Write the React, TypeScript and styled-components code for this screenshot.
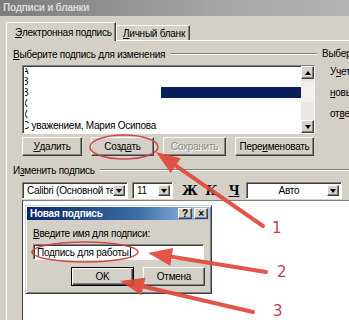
import * as React from 'react';
import styled, { createGlobalStyle, css } from 'styled-components';

const GlobalStyle = createGlobalStyle`
    html, body {
        margin: 0;
        padding: 0;
        background: #ffffff;
    }
    * {
        box-sizing: border-box;
    }
`;

const raised = css`
    border: 1px solid;
    border-color: #ffffff #404040 #404040 #ffffff;
    box-shadow: inset -1px -1px #808080;
    background: #d4d0c8;
`;

const sunken = css`
    border: 1px solid;
    border-color: #808080 #ffffff #ffffff #808080;
    box-shadow: inset 1px 1px #404040;
    background: #ffffff;
`;

type Pt = [number, number];

// arrow from tail to tip, with a triangular head at the tip
const Arrow: React.FC<{ tail: Pt; tip: Pt }> = ({ tail, tip }) => {
    const dx = tail[0] - tip[0];
    const dy = tail[1] - tip[1];
    const len = Math.hypot(dx, dy);
    const ux = dx / len;
    const uy = dy / len;
    const L = 24;
    const W = 9;
    const bx = tip[0] + ux * L;
    const by = tip[1] + uy * L;
    const head = [
        `${tip[0]},${tip[1]}`,
        `${bx - uy * W},${by + ux * W}`,
        `${bx + uy * W},${by - ux * W}`,
    ].join(' ');
    return (
        <g>
            <line x1={tail[0]} y1={tail[1]} x2={bx} y2={by} stroke="#e2483c" strokeWidth={4} strokeLinecap="round" />
            <polygon points={head} fill="#e2483c" />
        </g>
    );
};

const listItems = ['А', 'В', 'В', 'К', 'К', 'С уважением, Мария Осипова'];

const App: React.FC = () => {
    return (
        <StyledWindow>
            <GlobalStyle />
            <StyledTitleBar>Подписи и бланки</StyledTitleBar>
            <StyledBody>
                <StyledTabStrip>
                    <StyledTab active>
                        <u>Э</u>лектронная подпись
                    </StyledTab>
                    <StyledTab>
                        <u>Л</u>ичный бланк
                    </StyledTab>
                </StyledTabStrip>
                <StyledPanel>
                    <StyledUpper>
                        <StyledLeftColumn>
                            <StyledGroupHeader>
                                <span>
                                    <u>В</u>ыберите подпись для изменения
                                </span>
                            </StyledGroupHeader>
                            <StyledList>
                                <StyledListRows>
                                    {listItems.map((item, i) => (
                                        <StyledListRow key={i}>
                                            {item}
                                            {i === 2 && <StyledSelection />}
                                        </StyledListRow>
                                    ))}
                                </StyledListRows>
                                <StyledScrollBar>
                                    <StyledScrollButton>
                                        <StyledTriangle up />
                                    </StyledScrollButton>
                                    <StyledScrollTrack>
                                        <StyledScrollThumb />
                                    </StyledScrollTrack>
                                    <StyledScrollButton>
                                        <StyledTriangle />
                                    </StyledScrollButton>
                                </StyledScrollBar>
                            </StyledList>
                            <StyledButtonRow>
                                <StyledButton $width={60}>
                                    <u>У</u>далить
                                </StyledButton>
                                <StyledButton $width={63}>
                                    Созд<u>а</u>ть
                                </StyledButton>
                                <StyledButton $width={63} $disabled>
                                    Сохранить
                                </StyledButton>
                                <StyledButton $width={79}>
                                    Пере<u>и</u>меновать
                                </StyledButton>
                            </StyledButtonRow>
                        </StyledLeftColumn>
                        <StyledRightColumn>
                            <StyledRightLabel>Выберите подпись по умолчанию</StyledRightLabel>
                            <StyledRightItem>
                                У<u>ч</u>етная запись
                            </StyledRightItem>
                            <StyledRightItem>
                                <u>н</u>овые сообщения
                            </StyledRightItem>
                            <StyledRightItem>
                                от<u>в</u>еты
                            </StyledRightItem>
                        </StyledRightColumn>
                    </StyledUpper>

                    <StyledGroupHeader $wide>
                        <span>
                            И<u>з</u>менить подпись
                        </span>
                    </StyledGroupHeader>

                    <StyledToolbar>
                        <StyledCombo>
                            <StyledComboText>Calibri (Основной текст)</StyledComboText>
                            <StyledComboButton>
                                <StyledTriangle />
                            </StyledComboButton>
                        </StyledCombo>
                        <StyledCombo>
                            <StyledComboText>11</StyledComboText>
                            <StyledComboButton>
                                <StyledTriangle />
                            </StyledComboButton>
                        </StyledCombo>
                        <StyledFormatGroup>
                            <StyledFormatGlyph>Ж</StyledFormatGlyph>
                            <StyledFormatGlyph $italic>К</StyledFormatGlyph>
                            <StyledFormatGlyph $underline>Ч</StyledFormatGlyph>
                        </StyledFormatGroup>
                        <StyledCombo>
                            <StyledComboText $center>Авто</StyledComboText>
                            <StyledComboButton>
                                <StyledTriangle />
                            </StyledComboButton>
                        </StyledCombo>
                    </StyledToolbar>

                    <StyledEditor>
                        <StyledDialog>
                            <StyledDialogTitle>
                                <span>Новая подпись</span>
                                <StyledTitleButtons>
                                    <StyledTitleButton>?</StyledTitleButton>
                                    <StyledTitleButton>×</StyledTitleButton>
                                </StyledTitleButtons>
                            </StyledDialogTitle>
                            <StyledDialogBody>
                                <StyledDialogLabel>
                                    <u>В</u>ведите имя для подписи:
                                </StyledDialogLabel>
                                <StyledInput>
                                    Подпись для работы<StyledCaret />
                                </StyledInput>
                                <StyledDialogButtons>
                                    <StyledButton $width={63} $isDefault>
                                        OK
                                    </StyledButton>
                                    <StyledButton $width={62}>Отмена</StyledButton>
                                </StyledDialogButtons>
                            </StyledDialogBody>
                        </StyledDialog>
                    </StyledEditor>
                </StyledPanel>
            </StyledBody>

            <StyledAnnotations viewBox="0 0 349 320" width={349} height={320}>
                <ellipse cx={124} cy={147} rx={34} ry={12} fill="none" stroke="#d0403c" strokeWidth={1.5} />
                <ellipse cx={85} cy={252} rx={53} ry={10} fill="none" stroke="#d0403c" strokeWidth={1.5} />
                <Arrow tail={[263, 226]} tip={[156, 152]} />
                <Arrow tail={[266, 272]} tip={[148, 253]} />
                <Arrow tail={[253, 312]} tip={[120, 281]} />
                <StyledNumber x={272} y={233}>1</StyledNumber>
                <StyledNumber x={277} y={277}>2</StyledNumber>
                <StyledNumber x={273} y={316}>3</StyledNumber>
            </StyledAnnotations>
        </StyledWindow>
    );
};

const StyledWindow = styled.div`
    position: relative;
    width: 349px;
    height: 320px;
    overflow: hidden;
    background: #d4d0c8;
    font-family: 'Liberation Sans', Arial, sans-serif;
    font-size: 10px;
    letter-spacing: -0.25px;
    color: #000000;
`;

const StyledTitleBar = styled.div`
    height: 16px;
    padding-left: 3px;
    line-height: 16px;
    font-weight: bold;
    font-size: 10px;
    color: #dcdad4;
    background: linear-gradient(to right, #7c7c7c, #a4a4a4 60%, #b4b4b4);
    white-space: nowrap;
`;

const StyledBody = styled.div`
    width: 349px;
    padding: 6px 0 0 6px;
`;

const StyledTabStrip = styled.div`
    display: flex;
    align-items: flex-end;
    height: 18px;
    position: relative;
    z-index: 1;
`;

const StyledTab = styled.div<{ active?: boolean }>`
    display: flex;
    align-items: center;
    padding-left: ${(p) => (p.active ? 8 : 6)}px;
    width: ${(p) => (p.active ? 110 : 74)}px;
    height: ${(p) => (p.active ? 19 : 15)}px;
    margin-bottom: ${(p) => (p.active ? -1 : 0)}px;
    border-top: 1px solid #ffffff;
    border-left: 1px solid #ffffff;
    border-right: 1px solid #404040;
    box-shadow: inset -1px 0 #808080;
    background: #d4d0c8;
    white-space: nowrap;
`;

const StyledPanel = styled.div`
    width: 343px;
    border-top: 1px solid #ffffff;
    border-left: 1px solid #ffffff;
    padding: 7px 0 0 6px;
`;

const StyledUpper = styled.div`
    display: flex;
    overflow: hidden;
`;

const StyledLeftColumn = styled.div`
    width: 304px;
    flex: 0 0 304px;
`;

const StyledGroupHeader = styled.div<{ $wide?: boolean }>`
    display: flex;
    align-items: center;
    height: 12px;
    margin-top: ${(p) => (p.$wide ? 8 : 0)}px;
    white-space: nowrap;

    &::after {
        content: '';
        flex: 1;
        margin-left: 5px;
        border-top: 1px solid #808080;
        border-bottom: 1px solid #ffffff;
    }
`;

const StyledList = styled.div`
    ${sunken};
    display: flex;
    margin: 5px 0 0 9px;
    width: 293px;
    height: 69px;
    padding: 2px 0 2px 2px;
`;

const StyledListRows = styled.div`
    flex: 1;
    display: flex;
    flex-direction: column;
    justify-content: flex-end;
    overflow: hidden;
`;

const StyledListRow = styled.div`
    display: flex;
    height: 11px;
    line-height: 11px;
    margin-left: -3px;
    white-space: nowrap;
`;

const StyledSelection = styled.span`
    margin-left: auto;
    width: 140px;
    background: #0a1e5c;
`;

const StyledScrollBar = styled.div`
    display: flex;
    flex-direction: column;
    width: 13px;
    margin-top: -2px;
    margin-bottom: -2px;
`;

const StyledScrollButton = styled.div`
    ${raised};
    height: 13px;
    display: flex;
    align-items: center;
    justify-content: center;
`;

const StyledScrollTrack = styled.div`
    flex: 1;
    background: #e9e7e3;
    padding-top: 3px;
`;

const StyledScrollThumb = styled.div`
    height: 20px;
    background: #f2f1ee;
`;

const StyledTriangle = styled.span<{ up?: boolean }>`
    width: 0;
    height: 0;
    border-left: 3.5px solid transparent;
    border-right: 3.5px solid transparent;
    ${(p) => (p.up ? 'border-bottom: 4px solid #000;' : 'border-top: 4px solid #000;')}
`;

const StyledButtonRow = styled.div`
    display: flex;
    gap: 9px;
    margin: 3px 0 0 9px;
`;

const StyledButton = styled.div<{ $width: number; $disabled?: boolean; $isDefault?: boolean }>`
    ${raised};
    width: ${(p) => p.$width}px;
    flex: 0 0 auto;
    height: 19px;
    display: flex;
    align-items: center;
    justify-content: center;
    white-space: nowrap;
    color: ${(p) => (p.$disabled ? '#8c8a85' : '#000000')};
    text-shadow: ${(p) => (p.$disabled ? '1px 1px #ffffff' : 'none')};
    ${(p) =>
        p.$isDefault &&
        css`
            border: 1px solid #000000;
            box-shadow: inset 1px 1px #ffffff, inset -1px -1px #404040, inset -2px -2px #808080;
        `}
`;

const StyledRightColumn = styled.div`
    flex: 1;
    min-width: 0;
    padding-left: 5px;
    white-space: nowrap;
`;

const StyledRightLabel = styled.div`
    height: 12px;
    line-height: 12px;
`;

const StyledRightItem = styled.div`
    margin: 5px 0 0 8px;
    line-height: 14px;
    & + & {
        margin-top: 7px;
    }
`;

const StyledToolbar = styled.div`
    display: grid;
    grid-template-columns: 106px 41px 65px 96px;
    column-gap: 4px;
    align-items: center;
    margin: 6px 0 0 9px;
    height: 17px;
`;

const StyledCombo = styled.div`
    ${sunken};
    display: flex;
    min-width: 0;
    overflow: hidden;
    height: 17px;
    padding: 2px;
`;

const StyledComboText = styled.div<{ $center?: boolean }>`
    flex: 1;
    min-width: 0;
    overflow: hidden;
    white-space: nowrap;
    line-height: 12px;
    padding-left: 2px;
    text-align: ${(p) => (p.$center ? 'center' : 'left')};
`;

const StyledComboButton = styled.div`
    ${raised};
    flex: 0 0 12px;
    width: 12px;
    display: flex;
    align-items: center;
    justify-content: center;
`;

const StyledFormatGroup = styled.div`
    display: flex;
    align-items: center;
    gap: 11px;
    padding-left: 5px;
    min-width: 0;
`;

const StyledFormatGlyph = styled.span<{ $italic?: boolean; $underline?: boolean }>`
    flex: 0 0 12px;
    width: 12px;
    text-align: center;
    font-family: 'DejaVu Serif', 'Liberation Serif', serif;
    font-size: 12px;
    font-weight: bold;
    font-style: ${(p) => (p.$italic ? 'italic' : 'normal')};
    text-decoration: ${(p) => (p.$underline ? 'underline' : 'none')};
`;

const StyledEditor = styled.div`
    position: relative;
    margin: 1px 0 0 9px;
    height: 130px;
    border-top: 1px solid #808080;
    border-left: 1px solid #404040;
    background: #ffffff;
`;

const StyledDialog = styled.div`
    position: absolute;
    left: 2px;
    top: 4px;
    width: 187px;
    height: 89px;
    display: flex;
    flex-direction: column;
    padding: 1px;
    border: 1px solid;
    border-color: #d4d0c8 #404040 #404040 #d4d0c8;
    box-shadow: inset 1px 1px #ffffff, inset -1px -1px #808080;
    background: #d4d0c8;
`;

const StyledDialogTitle = styled.div`
    height: 13px;
    display: flex;
    align-items: center;
    padding: 0 2px 0 3px;
    background: linear-gradient(to right, #0a246a, #3a6ea5 60%, #a6caf0);
    color: #ffffff;
    font-weight: bold;
    white-space: nowrap;
`;

const StyledTitleButtons = styled.div`
    display: flex;
    gap: 2px;
    margin-left: auto;
`;

const StyledTitleButton = styled.div`
    ${raised};
    width: 14px;
    height: 11px;
    display: flex;
    align-items: center;
    justify-content: center;
    color: #000000;
    font-size: 10px;
    line-height: 9px;
    font-weight: bold;
`;

const StyledDialogBody = styled.div`
    padding: 8px 6px 0 6px;
`;

const StyledDialogLabel = styled.div`
    line-height: 12px;
    white-space: nowrap;
`;

const StyledInput = styled.div`
    ${sunken};
    margin-top: 4px;
    width: 171px;
    height: 16px;
    padding-left: 3px;
    display: flex;
    align-items: center;
    white-space: nowrap;
`;

const StyledCaret = styled.span`
    display: inline-block;
    width: 1px;
    height: 11px;
    background: #000000;
    margin-left: 1px;
`;

const StyledDialogButtons = styled.div`
    display: flex;
    gap: 9px;
    margin: 7px 0 0 38px;
`;

const StyledAnnotations = styled.svg`
    position: absolute;
    left: 0;
    top: 0;
    pointer-events: none;
    opacity: 0.92;
`;

const StyledNumber = styled.text`
    font-family: 'DejaVu Sans', sans-serif;
    font-size: 15px;
    fill: #b8323c;
`;

export default App;
